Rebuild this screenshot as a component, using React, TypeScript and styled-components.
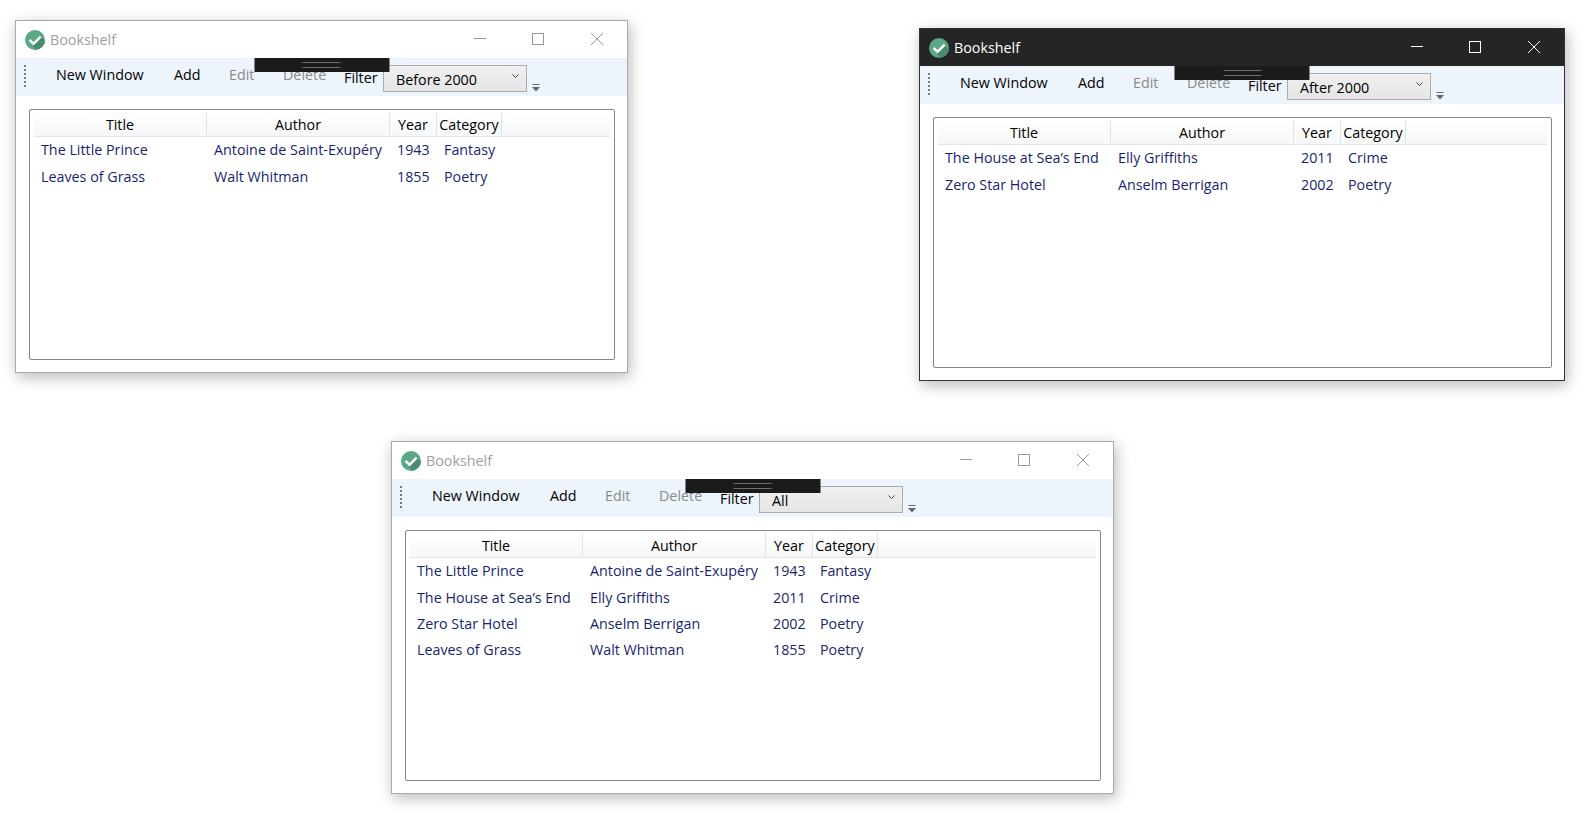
import React from 'react';
import styled, { createGlobalStyle } from 'styled-components';

type Book = { title: string; author: string; year: number; category: string };

const littlePrince: Book = { title: 'The Little Prince', author: 'Antoine de Saint-Exupéry', year: 1943, category: 'Fantasy' };
const seasEnd: Book = { title: 'The House at Sea’s End', author: 'Elly Griffiths', year: 2011, category: 'Crime' };
const zeroStar: Book = { title: 'Zero Star Hotel', author: 'Anselm Berrigan', year: 2002, category: 'Poetry' };
const leaves: Book = { title: 'Leaves of Grass', author: 'Walt Whitman', year: 1855, category: 'Poetry' };

const GlobalStyle = createGlobalStyle`
  html, body {
    margin: 0;
    padding: 0;
    background: #ffffff;
    font-family: "Open Sans", "Noto Sans", sans-serif;
    font-size: 14.3px;
    color: #000000;
  }
`;

const Desktop = styled.div`
  position: relative;
  width: 1590px;
  height: 827px;
  overflow: hidden;
`;

const Window = styled.div<{ $left: number; $top: number; $width: number; $active?: boolean }>`
  position: absolute;
  left: ${(p) => p.$left}px;
  top: ${(p) => p.$top}px;
  width: ${(p) => p.$width}px;
  height: 353px;
  box-sizing: border-box;
  display: flex;
  flex-direction: column;
  background: #ffffff;
  border: 1px solid ${(p) => (p.$active ? '#333333' : '#a9a9a9')};
  box-shadow: 2px 4px 14px rgba(0, 0, 0, 0.28);
`;

const TitleBar = styled.div<{ $active?: boolean }>`
  flex: none;
  height: 37px;
  display: flex;
  align-items: center;
  padding: 0 1px 0 9px;
  background: ${(p) => (p.$active ? '#252525' : '#ffffff')};
  color: ${(p) => (p.$active ? '#ffffff' : '#a0a0a0')};
`;

const AppIcon = styled.svg`
  width: 20px;
  height: 20px;
  flex: none;
`;

const TitleText = styled.span`
  margin-left: 5px;
  flex: 1;
  line-height: 20px;
`;

const CaptionButton = styled.button<{ $active?: boolean }>`
  width: 58.5px;
  height: 37px;
  padding: 0;
  border: 0;
  background: none;
  display: flex;
  align-items: center;
  justify-content: center;
  color: ${(p) => (p.$active ? '#ffffff' : '#999999')};

  svg {
    width: 12px;
    height: 12px;
    display: block;
    margin-top: -1px;
  }
`;

const Toolbar = styled.div`
  position: relative;
  flex: none;
  height: 38px;
  box-sizing: border-box;
  padding: 7px 0 0 8px;
  display: flex;
  align-items: flex-start;
  background: #edf4fc;
`;

const Grip = styled.div`
  width: 2px;
  height: 22px;
  margin-right: 30px;
  background: repeating-linear-gradient(to bottom, #777777 0 2px, transparent 2px 4px);
`;

const ToolButton = styled.button<{ $disabled?: boolean; $width: number }>`
  width: ${(p) => p.$width}px;
  height: 20px;
  padding: 0;
  border: 0;
  background: none;
  font: inherit;
  line-height: 20px;
  text-align: left;
  white-space: nowrap;
  color: ${(p) => (p.$disabled ? '#8a8a8a' : '#000000')};
`;

const FilterLabel = styled.span`
  width: 39px;
  line-height: 20px;
  margin-top: 3px;
`;

const Combo = styled.div`
  width: 144px;
  height: 27px;
  box-sizing: border-box;
  padding: 1px 7px 0 12px;
  display: flex;
  align-items: center;
  justify-content: space-between;
  border: 1px solid #acacac;
  background: linear-gradient(to bottom, #f0f0f0, #e5e5e5);
`;

const Chevron = styled.svg`
  width: 7px;
  height: 5px;
  margin-top: -5px;
`;

const Overflow = styled.svg`
  width: 8px;
  height: 8px;
  margin: 19px 0 0 5px;
`;

const DragBar = styled.div`
  position: absolute;
  top: 0;
  left: 50%;
  transform: translateX(-50%);
  width: 135px;
  height: 14px;
  display: flex;
  justify-content: center;
  background: #1b1b1b;
`;

const DragHandle = styled.div`
  width: 38px;
  height: 4px;
  margin-top: 4px;
  border-top: 1px solid #6f6f6f;
  border-bottom: 1px solid #6f6f6f;
`;

const ListView = styled.div`
  flex: 1;
  margin: 13px 12px 12px 13px;
  padding: 2px 4px 0 4px;
  border: 1px solid #828790;
  border-radius: 2px;
  min-height: 0;
`;

const columns = '173px 183px 47px 65px 1fr';

const HeaderRow = styled.div`
  height: 25px;
  margin-bottom: -1px;
  box-sizing: border-box;
  display: grid;
  grid-template-columns: ${columns};
  background: linear-gradient(to bottom, #ffffff, #f6f7f8);
  border-bottom: 1px solid #e3e4e6;
`;

const HeaderCell = styled.div`
  padding-top: 1px;
  line-height: 24px;
  height: 24px;
  box-sizing: border-box;
  text-align: center;
  white-space: nowrap;
  border-right: 1px solid #e2e3e5;

  &:last-child {
    border-right: 0;
  }
`;

const BookRow = styled.div`
  height: 26px;
  display: grid;
  grid-template-columns: ${columns};
  align-items: center;
  color: #1a1f70;

  &:nth-child(2) {
    height: 27px;
  }
`;

const BookCell = styled.div`
  padding-left: 7px;
  white-space: nowrap;
`;

function BookshelfIcon() {
    return (
        <AppIcon viewBox="0 0 20 20">
            <defs>
                <clipPath id="disc">
                    <circle cx="10" cy="10" r="10" />
                </clipPath>
            </defs>
            <circle cx="10" cy="10" r="10" fill="#5aa888" />
            <polygon points="4.5,10.5 8.6,14.2 15.6,6.8 23,14 23,23 13,23" fill="#4a8a70" clipPath="url(#disc)" />
            <path d="M4.6 10 L8.6 13.8 L15.6 6.6" fill="none" stroke="#ffffff" strokeWidth="2.5" />
        </AppIcon>
    );
}

function WindowFrame(props: { left: number; top: number; width: number; active?: boolean; filter: string; books: Book[] }) {
    const { active } = props;

    return (
        <Window $left={props.left} $top={props.top} $width={props.width} $active={active}>
            <TitleBar $active={active}>
                <BookshelfIcon />
                <TitleText>Bookshelf</TitleText>
                <CaptionButton $active={active} aria-label="Minimize">
                    <svg viewBox="0 0 12 12"><path d="M0 5.5H12" stroke="currentColor" fill="none" /></svg>
                </CaptionButton>
                <CaptionButton $active={active} aria-label="Maximize">
                    <svg viewBox="0 0 12 12"><rect x="0.5" y="0.5" width="11" height="11" stroke="currentColor" fill="none" /></svg>
                </CaptionButton>
                <CaptionButton $active={active} aria-label="Close">
                    <svg viewBox="0 0 12 12"><path d="M0 0L12 12M12 0L0 12" stroke="currentColor" fill="none" /></svg>
                </CaptionButton>
            </TitleBar>
            <Toolbar>
                <Grip />
                <ToolButton $width={118}>New Window</ToolButton>
                <ToolButton $width={55}>Add</ToolButton>
                <ToolButton $width={54} $disabled>Edit</ToolButton>
                <ToolButton $width={61} $disabled>Delete</ToolButton>
                <FilterLabel>Filter</FilterLabel>
                <Combo>
                    <span>{props.filter}</span>
                    <Chevron viewBox="0 0 7 5"><path d="M0.5 0.5L3.5 3.5L6.5 0.5" fill="none" stroke="#444444" /></Chevron>
                </Combo>
                <Overflow viewBox="0 0 8 8">
                    <path d="M0.5 0.5H7.5" stroke="#666666" fill="none" />
                    <polygon points="0,3 8,3 4,7.5" fill="#666666" />
                </Overflow>
                <DragBar><DragHandle /></DragBar>
            </Toolbar>
            <ListView>
                <HeaderRow>
                    <HeaderCell>Title</HeaderCell>
                    <HeaderCell>Author</HeaderCell>
                    <HeaderCell>Year</HeaderCell>
                    <HeaderCell>Category</HeaderCell>
                    <HeaderCell />
                </HeaderRow>
                {props.books.map((book) => (
                    <BookRow key={book.title}>
                        <BookCell>{book.title}</BookCell>
                        <BookCell>{book.author}</BookCell>
                        <BookCell>{book.year}</BookCell>
                        <BookCell>{book.category}</BookCell>
                    </BookRow>
                ))}
            </ListView>
        </Window>
    );
}

export default function App() {
    return (
        <Desktop>
            <GlobalStyle />
            <WindowFrame left={15} top={20} width={613} filter="Before 2000" books={[littlePrince, leaves]} />
            <WindowFrame left={919} top={28} width={646} active filter="After 2000" books={[seasEnd, zeroStar]} />
            <WindowFrame left={391} top={441} width={723} filter="All" books={[littlePrince, seasEnd, zeroStar, leaves]} />
        </Desktop>
    );
}
